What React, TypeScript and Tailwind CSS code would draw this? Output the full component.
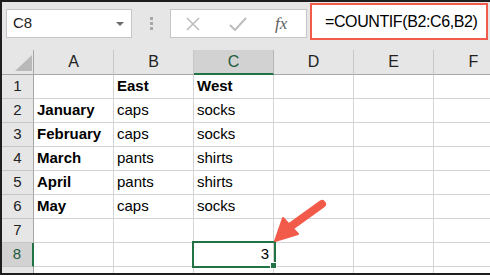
import React from "react";

const rows = [
  ["", "East", "West"],
  ["January", "caps", "socks"],
  ["February", "caps", "socks"],
  ["March", "pants", "shirts"],
  ["April", "pants", "shirts"],
  ["May", "caps", "socks"],
  ["", "", ""],
  ["", "", ""],
  ["", "", ""],
];

const cols = ["A", "B", "C", "D", "E", "F"];

function Toolbar() {
  return (
    <div className="flex h-[48px] items-start bg-[#e6e6e6]">
      {/* name box */}
      <div className="ml-[4px] mt-[7px] flex h-[29px] w-[126px] items-center justify-between border border-[#c6c6c6] bg-white pl-[6px] pr-[7px]">
        <span className="text-[15px] text-[#222]">C8</span>
        <svg width="8" height="4" viewBox="0 0 8 4">
          <path d="M0 0 L8 0 L4 4 Z" fill="#6d6d6d" />
        </svg>
      </div>
      {/* grip dots */}
      <div className="ml-[18px] mt-[15px] flex flex-col gap-[2px]">
        <div className="h-[3px] w-[3px] bg-[#a8a8a8]" />
        <div className="h-[3px] w-[3px] bg-[#a8a8a8]" />
        <div className="h-[3px] w-[3px] bg-[#a8a8a8]" />
      </div>
      {/* cancel / enter / fx */}
      <div className="ml-[17px] mt-[7px] flex h-[29px] w-[137px] items-center border border-[#c6c6c6] bg-white">
        <svg className="ml-[15px]" width="14" height="14" viewBox="0 0 14 14">
          <path d="M1 1 L13 13 M13 1 L1 13" stroke="#bdbdbd" strokeWidth="1.6" />
        </svg>
        <svg className="ml-[29px]" width="18" height="14" viewBox="0 0 18 14">
          <path d="M1 8 L6 13 L17 1" stroke="#bdbdbd" strokeWidth="2" fill="none" />
        </svg>
        <span className="ml-[28px] font-['Liberation_Serif',serif] text-[17px] italic text-[#5f5f5f]">fx</span>
      </div>
      {/* formula, highlighted */}
      <div className="ml-[3px] mt-[1px] flex h-[37px] w-[178px] items-center border-2 border-[#f25a4a] bg-white pl-[13px]">
        <span className="whitespace-nowrap text-[16px] tracking-[-0.4px] text-black">=COUNTIF(B2:C6,B2)</span>
      </div>
    </div>
  );
}

function Grid() {
  return (
    <div className="grid grid-cols-[32px_repeat(6,80px)] grid-rows-[25px_repeat(9,24px)] overflow-hidden">
      {/* corner */}
      <div className="relative border-r border-b border-[#a6a6a6] bg-[#e6e6e6]">
        <svg className="absolute left-[13px] top-[5px]" width="17" height="16" viewBox="0 0 17 16">
          <path d="M17 0 L17 16 L0 16 Z" fill="#b9b9b9" />
        </svg>
      </div>
      {cols.map((c) =>
        c === "C" ? (
          <div key={c} className="flex items-center justify-center border-r border-b-2 border-r-[#b6b6b6] border-b-[#217346] bg-[#d2d2d2] text-[16px] text-[#215a3c]">
            {c}
          </div>
        ) : (
          <div key={c} className="flex items-center justify-center border-r border-b border-r-[#c8c8c8] border-b-[#a6a6a6] bg-[#e6e6e6] text-[16px] text-[#222]">
            {c}
          </div>
        )
      )}
      {rows.map((r, i) => (
        <React.Fragment key={i}>
          {i === 7 ? (
            <div className="flex items-center justify-center border-r-2 border-b border-r-[#217346] border-b-[#c6c6c6] bg-[#d2d2d2] text-[15px] text-[#215a3c]">
              {i + 1}
            </div>
          ) : (
            <div className="flex items-center justify-center border-r border-b border-r-[#a6a6a6] border-b-[#c6c6c6] bg-[#e6e6e6] text-[15px] text-[#222]">
              {i + 1}
            </div>
          )}
          <div className="flex items-center border-r border-b border-[#d4d4d4] pl-[3px] text-[15px] font-bold text-black">
            {r[0]}
          </div>
          <div className={`flex items-center border-r border-b border-[#d4d4d4] pl-[3px] text-[15px] text-black ${i === 0 ? "font-bold" : ""}`}>
            {r[1]}
          </div>
          {i === 7 ? (
            <div className="relative z-10 flex items-center justify-end border-r border-b border-[#d4d4d4] pr-[4px] text-[15px] text-black">
              3
              <div className="absolute left-[-2px] top-[-2px] h-[27px] w-[84px] border-2 border-[#217346]" />
              <div className="absolute left-[76px] top-[19px] h-[7px] w-[7px] border border-white bg-[#217346]" />
            </div>
          ) : (
            <div className={`flex items-center border-r border-b border-[#d4d4d4] pl-[3px] text-[15px] text-black ${i === 0 ? "font-bold" : ""}`}>
              {r[2]}
            </div>
          )}
          <div className="border-r border-b border-[#d4d4d4]" />
          <div className="border-r border-b border-[#d4d4d4]" />
          <div className="border-r border-b border-[#d4d4d4]" />
        </React.Fragment>
      ))}
    </div>
  );
}

export default function App() {
  return (
    <div className="relative h-[275px] w-[490px] overflow-hidden border-t-2 border-b-2 border-l-2 border-[#1e1e1e] bg-white font-['Liberation_Sans',Arial,sans-serif]">
      <Toolbar />
      <Grid />
      <svg className="pointer-events-none absolute left-[-2px] top-[-2px] z-20" width="490" height="275" viewBox="0 0 490 275">
        <line x1="322" y1="204" x2="290" y2="227" stroke="#f25a4a" strokeWidth="8" strokeLinecap="round" />
        <path d="M275 241 L283 218 L298 234 Z" fill="#f25a4a" stroke="#f25a4a" strokeWidth="2" strokeLinejoin="round" />
      </svg>
    </div>
  );
}
